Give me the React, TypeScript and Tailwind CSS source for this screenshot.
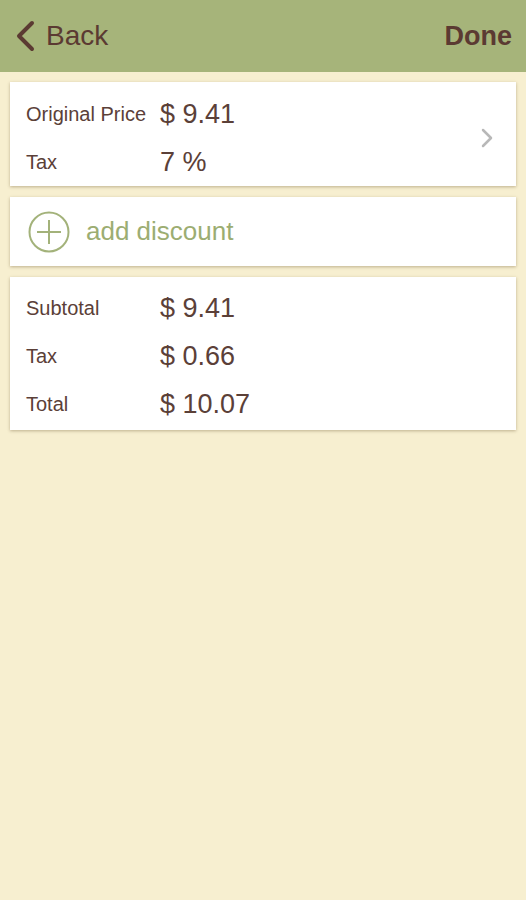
import React from 'react';

const font = { fontFamily: '"Liberation Sans", Arial, sans-serif' };

const Row: React.FC<{ label: string; value: string }> = ({ label, value }) => (
  <div className="flex items-center h-[48px]">
    <span className="w-[134px] text-[20px] text-[#5b4038]">{label}</span>
    <span className="text-[27px] text-[#5b4038]">{value}</span>
  </div>
);

const App: React.FC = () => {
  return (
    <div className="w-[526px] h-[900px] bg-[#f7efd0] flex flex-col" style={font}>
      <div className="h-[72px] bg-[#a6b47a] flex items-center justify-between pl-[14px] pr-[14px]">
        <div className="flex items-center gap-[10px]">
          <svg width="22" height="32" viewBox="0 0 22 32">
            <path d="M18 3 L5 16 L18 29" fill="none" stroke="#5b3a32" strokeWidth="4" strokeLinecap="round" strokeLinejoin="round" />
          </svg>
          <span className="text-[28px] text-[#5b3a32]">Back</span>
        </div>
        <span className="text-[27px] text-[#5b3a32] font-bold">Done</span>
      </div>

      <div className="flex flex-col gap-[11px] px-[10px] pt-[10px]">
        <div className="bg-white shadow-[0_1px_3px_rgba(120,100,60,0.45)] flex items-center pl-[16px] pr-[22px] pt-[8px]">
          <div className="flex-1 flex flex-col">
            <Row label="Original Price" value="$ 9.41" />
            <Row label="Tax" value="7 %" />
          </div>
          <svg width="14" height="22" viewBox="0 0 14 22">
            <path d="M3 3 L11 11 L3 19" fill="none" stroke="#b8b8b8" strokeWidth="2.5" strokeLinecap="round" strokeLinejoin="round" />
          </svg>
        </div>

        <div className="bg-white shadow-[0_1px_3px_rgba(120,100,60,0.45)] h-[69px] flex items-center pl-[18px] gap-[16px]">
          <svg width="42" height="42" viewBox="0 0 42 42">
            <circle cx="21" cy="21" r="19.5" fill="none" stroke="#a3b27a" strokeWidth="2" />
            <path d="M21 9 V33 M9 21 H33" stroke="#a3b27a" strokeWidth="2" />
          </svg>
          <span className="text-[26px] text-[#9cad72]">add discount</span>
        </div>

        <div className="bg-white shadow-[0_1px_3px_rgba(120,100,60,0.45)] pl-[16px] pt-[7px] pb-[2px]">
          <Row label="Subtotal" value="$ 9.41" />
          <Row label="Tax" value="$ 0.66" />
          <Row label="Total" value="$ 10.07" />
        </div>
      </div>
    </div>
  );
};

export default App;
